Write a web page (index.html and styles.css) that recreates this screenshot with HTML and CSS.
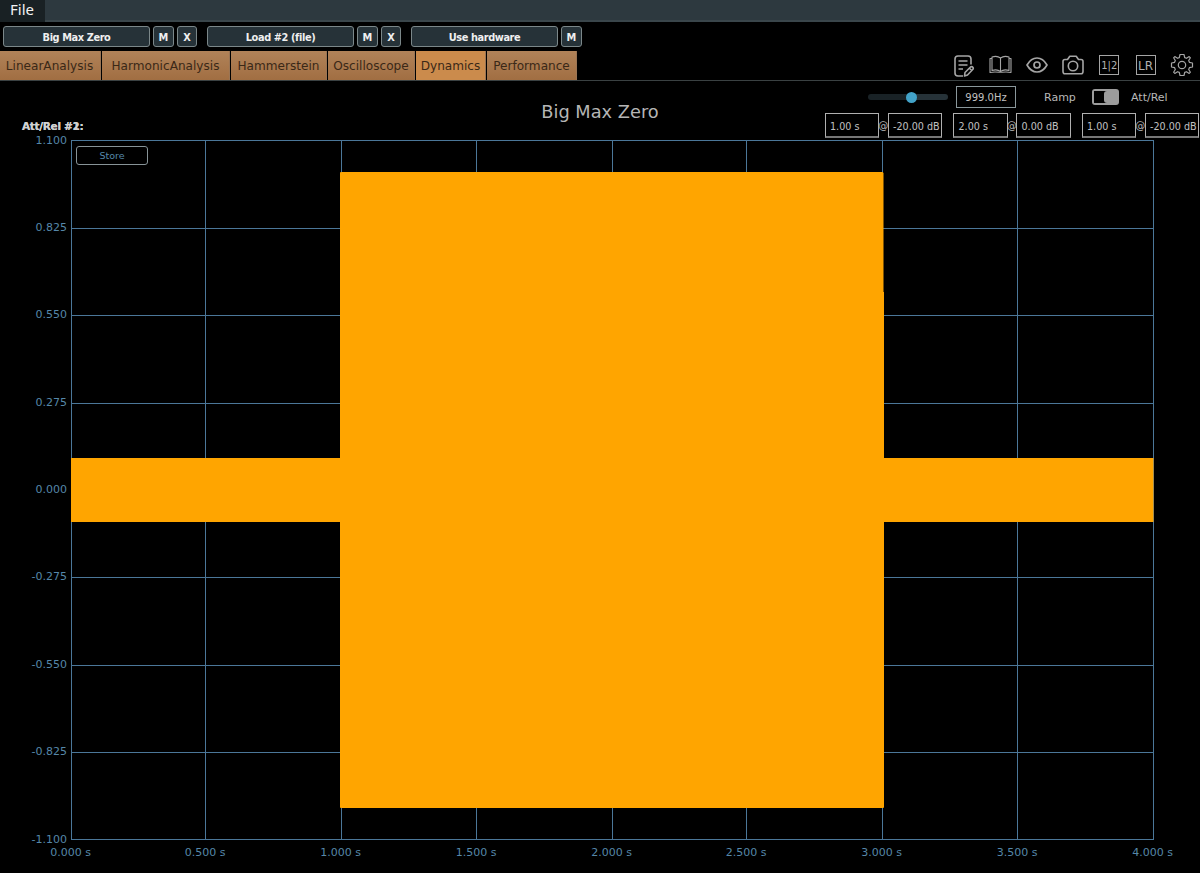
FILE: index.html
```
<!DOCTYPE html>
<html>
<head>
	<meta charset="utf-8">
	<title>Big Max Zero</title>
	<link rel="stylesheet" href="styles.css">
</head>
<body>
	<div class="menubar"><span class="menu">File</span></div>
	<div class="plugins">
		<div class="group">
			<button class="btn name">Big Max Zero</button>
			<button class="btn">M</button>
			<button class="btn">X</button>
		</div>
		<div class="group">
			<button class="btn name">Load #2 (file)</button>
			<button class="btn">M</button>
			<button class="btn">X</button>
		</div>
		<div class="group">
			<button class="btn name">Use hardware</button>
			<button class="btn">M</button>
		</div>
	</div>
	<div class="toolbar">
		<div class="tabs">
			<a class="tab linear">LinearAnalysis</a>
			<a class="tab harmonic">HarmonicAnalysis</a>
			<a class="tab hammer">Hammerstein</a>
			<a class="tab scope">Oscilloscope</a>
			<a class="tab dynamics active">Dynamics</a>
			<a class="tab perf">Performance</a>
		</div>
		<div class="icons">
			<!-- notes -->
			<svg width="24" height="24" viewBox="0 0 24 24" stroke-width="1.600">
				<path d="M11 23H6Q3 23 3 20V6Q3 3 6 3H16Q19 3 19 6V11.500M6.500 8H15.500M6.500 12H15.500M6.500 16H11"/>
				<path d="M12.500 23L13 19.500L18.500 14Q20 13.100 21 14.500Q21.700 15.700 20.500 16.700L15.500 22ZM17.500 15.200L19.700 17.500"/>
			</svg>
			<!-- manual -->
			<svg width="24" height="24" viewBox="0 0 24 24" stroke-width="1.100">
				<path d="M12.500 5Q9 2.300 4 4V17.500Q9 15.800 12.500 18.500Q16 15.800 21 17.500V4Q16 2.300 12.500 5V18.500"/>
				<path d="M4 5.500H2V19.500Q6.500 18.500 11 19.300H14Q18.500 18.500 23 19.500V5.500H21"/>
			</svg>
			<!-- view -->
			<svg width="24" height="24" viewBox="0 0 24 24" stroke-width="1.700">
				<path d="M3 12Q7 5 13 5T23 12Q19 19 13 19T3 12Z"/>
				<circle cx="13" cy="12" r="3"/>
			</svg>
			<!-- snapshot -->
			<svg width="24" height="24" viewBox="0 0 24 24" stroke-width="1.600">
				<path d="M4 6.500H6.500L8.800 3.200H15.200L17.500 6.500H20Q22 6.500 22 8.500V18.500Q22 20.800 20 20.800H4Q2 20.800 2 18.500V8.500Q2 6.500 4 6.500Z"/>
				<circle cx="12" cy="13" r="4.700"/>
			</svg>
			<span class="boxicon half">1|2</span>
			<span class="boxicon">LR</span>
			<!-- settings -->
			<svg width="24" height="24" viewBox="0 0 24 24" stroke-width="1.200">
				<path d="M10 1.500H14L14.700 4.600L16.500 5.300L19.200 3.600L20.400 4.800L18.700 7.500L19.400 9.300L22.500 10V14L19.400 14.700L18.700 16.500L20.400 19.200L19.200 20.400L16.500 18.700L14.700 19.400L14 22.500H10L9.300 19.400L7.500 18.700L4.800 20.400L3.600 19.200L5.300 16.500L4.600 14.700L1.500 14V10L4.600 9.300L5.300 7.500L3.600 4.800L4.800 3.600L7.500 5.300L9.300 4.600Z"/>
				<circle cx="12" cy="12" r="3.700"/>
			</svg>
		</div>
	</div>
	<div class="head">
		<div class="legend"><span>Att/Rel #1:</span><span class="over">Att/Rel #2:</span></div>
		<h1>Big Max Zero</h1>
		<div class="controls">
			<div class="row">
				<div class="slider"><i></i></div>
				<span class="field freq">999.0Hz</span>
				<span class="ramp">Ramp</span>
				<div class="switch"><i></i></div>
				<span>Att/Rel</span>
			</div>
			<div class="row steps">
				<div class="step"><span class="field">1.00 s</span><b>@</b><span class="field">-20.00 dB</span></div>
				<div class="step"><span class="field">2.00 s</span><b>@</b><span class="field">0.00 dB</span></div>
				<div class="step"><span class="field">1.00 s</span><b>@</b><span class="field">-20.00 dB</span></div>
			</div>
		</div>
	</div>
	<div class="plot">
		<svg width="1200" height="733" viewBox="0 140 1200 733">
			<g class="grid">
				<path d="M71 140.500H1154M71 228.500H1154M71 315.500H1154M71 403.500H1154M71 577.500H1154M71 665.500H1154M71 752.500H1154M71 839.500H1154"/>
				<path d="M71.500 140V840M205.500 140V840M341.500 140V840M476.500 140V840M612.500 140V840M746.500 140V840M882.500 140V840M1017.500 140V840M1153.500 140V840"/>
			</g>
			<path class="wave" d="M71 458H340V173Q340 172 341 172H882.500L883.500 173V292H884V458H1153.500V522H884V807Q884 808 883 808H341Q340 808 340 807V522H71Z"/>
			<g class="ylabels">
				<text x="67" y="143.500">1.100</text>
				<text x="67" y="231">0.825</text>
				<text x="67" y="318">0.550</text>
				<text x="67" y="405.500">0.275</text>
				<text x="67" y="493">0.000</text>
				<text x="67" y="580">-0.275</text>
				<text x="67" y="668">-0.550</text>
				<text x="67" y="755">-0.825</text>
				<text x="67" y="843">-1.100</text>
			</g>
			<g class="xlabels">
				<text x="70.500" y="856">0.000 s</text>
				<text x="205" y="856">0.500 s</text>
				<text x="340.500" y="856">1.000 s</text>
				<text x="476" y="856">1.500 s</text>
				<text x="611.500" y="856">2.000 s</text>
				<text x="746" y="856">2.500 s</text>
				<text x="881.500" y="856">3.000 s</text>
				<text x="1017" y="856">3.500 s</text>
				<text x="1152.500" y="856">4.000 s</text>
			</g>
		</svg>
		<button class="store">Store</button>
	</div>
</body>
</html>
```
FILE: styles.css
```
* {
	margin: 0;
	padding: 0;
	box-sizing: border-box;
}
body {
	width: 1200px;
	height: 873px;
	overflow: hidden;
	background: #000;
	color: #b8b8b8;
	font-family: "DejaVu Sans", sans-serif;
}
.menubar {
	height: 22px;
	background: #2d393f;
	border-bottom: 2px solid #3a464b;
}
.menu {
	display: block;
	width: 45px;
	height: 22px;
	padding-left: 10px;
	background: #192124;
	color: #f2f2f2;
	font: 15px/19px "Noto Sans", sans-serif;
}
.plugins {
	display: flex;
	gap: 10px;
	height: 29px;
	padding: 4px 3px 0;
}
.group {
	display: flex;
	gap: 3px;
}
.btn {
	width: 20.500px;
	height: 21px;
	padding-top: 1px;
	border: 1px solid #7b8789;
	border-radius: 3px;
	background: #263238;
	color: #efefef;
	font: bold 9.8px "DejaVu Sans", sans-serif;
	letter-spacing: -.4px;
}
.name {
	width: 147px;
}
.toolbar {
	display: flex;
	justify-content: space-between;
	height: 30px;
	border-bottom: 1px solid #3a4142;
}
.tabs {
	display: flex;
	gap: 1px;
}
.tab {
	height: 29px;
	border-right: 1px solid #9a7555;
	background: linear-gradient(#b18359, #a16e42);
	color: #3a2817;
	font-size: 12.100px;
	line-height: 30px;
	text-align: center;
}
.linear { width: 101px; padding-right: 1px; }
.harmonic { width: 128px; }
.hammer { width: 96px; }
.scope { width: 87px; }
.dynamics { width: 70px; }
.perf { width: 90px; }
.active {
	background: #cb8b4c;
}
.icons {
	display: flex;
	align-items: center;
	gap: 12.400px;
	padding: 0 6px 1px 0;
}
.icons svg {
	fill: none;
	stroke: #a5a5a5;
	stroke-linejoin: round;
}
.boxicon {
	width: 20px;
	height: 20px;
	margin: 0 2px;
	border: 1px solid #a5a5a5;
	color: #b0b0b0;
	font-size: 12px;
	line-height: 20px;
	text-align: center;
}
.half {
	font-size: 10px;
}
.head {
	display: flex;
	height: 59px;
}
.legend {
	position: relative;
	width: 500px;
	padding: 39px 0 0 22px;
	color: #d0d0d0;
	font-size: 10.500px;
	font-weight: bold;
	letter-spacing: -.3px;
}
.over {
	position: absolute;
	left: 22px;
	top: 39px;
}
h1 {
	width: 200px;
	padding-top: 20px;
	color: #b5b5b5;
	font-size: 17.800px;
	font-weight: normal;
	line-height: 21px;
	text-align: center;
}
.controls {
	width: 500px;
	padding-top: 5px;
}
.row {
	display: flex;
	align-items: center;
	height: 22px;
	padding-left: 168px;
	font-size: 11px;
}
.slider {
	width: 80px;
	height: 6px;
	border-radius: 3px;
	background: linear-gradient(90deg, #192226 44px, #263238 44px);
}
.slider i {
	display: block;
	width: 11px;
	height: 11px;
	margin: -2px 0 0 38px;
	border-radius: 50%;
	background: #42a2c8;
}
.field {
	width: 54.500px;
	height: 25px;
	padding-left: 4.500px;
	border: 1px solid #b0b0b0;
	border-bottom: 2px solid #777;
	color: #c0c0c0;
	font-size: 9.600px;
	line-height: 25px;
	white-space: nowrap;
}
.freq {
	width: 60px;
	height: 22px;
	margin-left: 8px;
	padding: 0;
	border: 1px solid #8a979b;
	font-size: 10px;
	line-height: 22px;
	text-align: center;
}
.ramp {
	width: 32px;
	margin: 0 16px 0 28px;
}
.switch {
	width: 27px;
	height: 16px;
	margin-right: 12px;
	padding: 2px;
	border-radius: 3px;
	background: #9c9c9c;
}
.switch i {
	display: flex;
	justify-content: flex-end;
	width: 13px;
	height: 12px;
	background: #000;
}
.switch i::after {
	content: "";
	width: 3px;
	border-radius: 3px 0 0 3px;
	background: #9c9c9c;
}
.steps {
	gap: 11px;
	height: 25px;
	margin-top: 5px;
	padding-left: 124.500px;
}
.step {
	display: flex;
	align-items: center;
	width: 117.500px;
}
.step b {
	width: 8.500px;
	font-size: 10px;
	font-weight: normal;
	display: flex;
	justify-content: center;
}
.plot {
	position: relative;
}
.plot svg {
	display: block;
	overflow: visible;
}
.grid {
	fill: none;
	stroke: #4b7799;
}
.wave {
	fill: #ffa500;
}
text {
	fill: #5587a9;
	font-size: 11px;
}
.ylabels {
	font-size: 11px;
	text-anchor: end;
}
.xlabels {
	text-anchor: middle;
}
.store {
	position: absolute;
	left: 76px;
	top: 6px;
	width: 72px;
	height: 19px;
	border: 1px solid #879397;
	border-radius: 3px;
	background: #000;
	color: #5587a9;
	font: 9.500px "DejaVu Sans", sans-serif;
}
```
